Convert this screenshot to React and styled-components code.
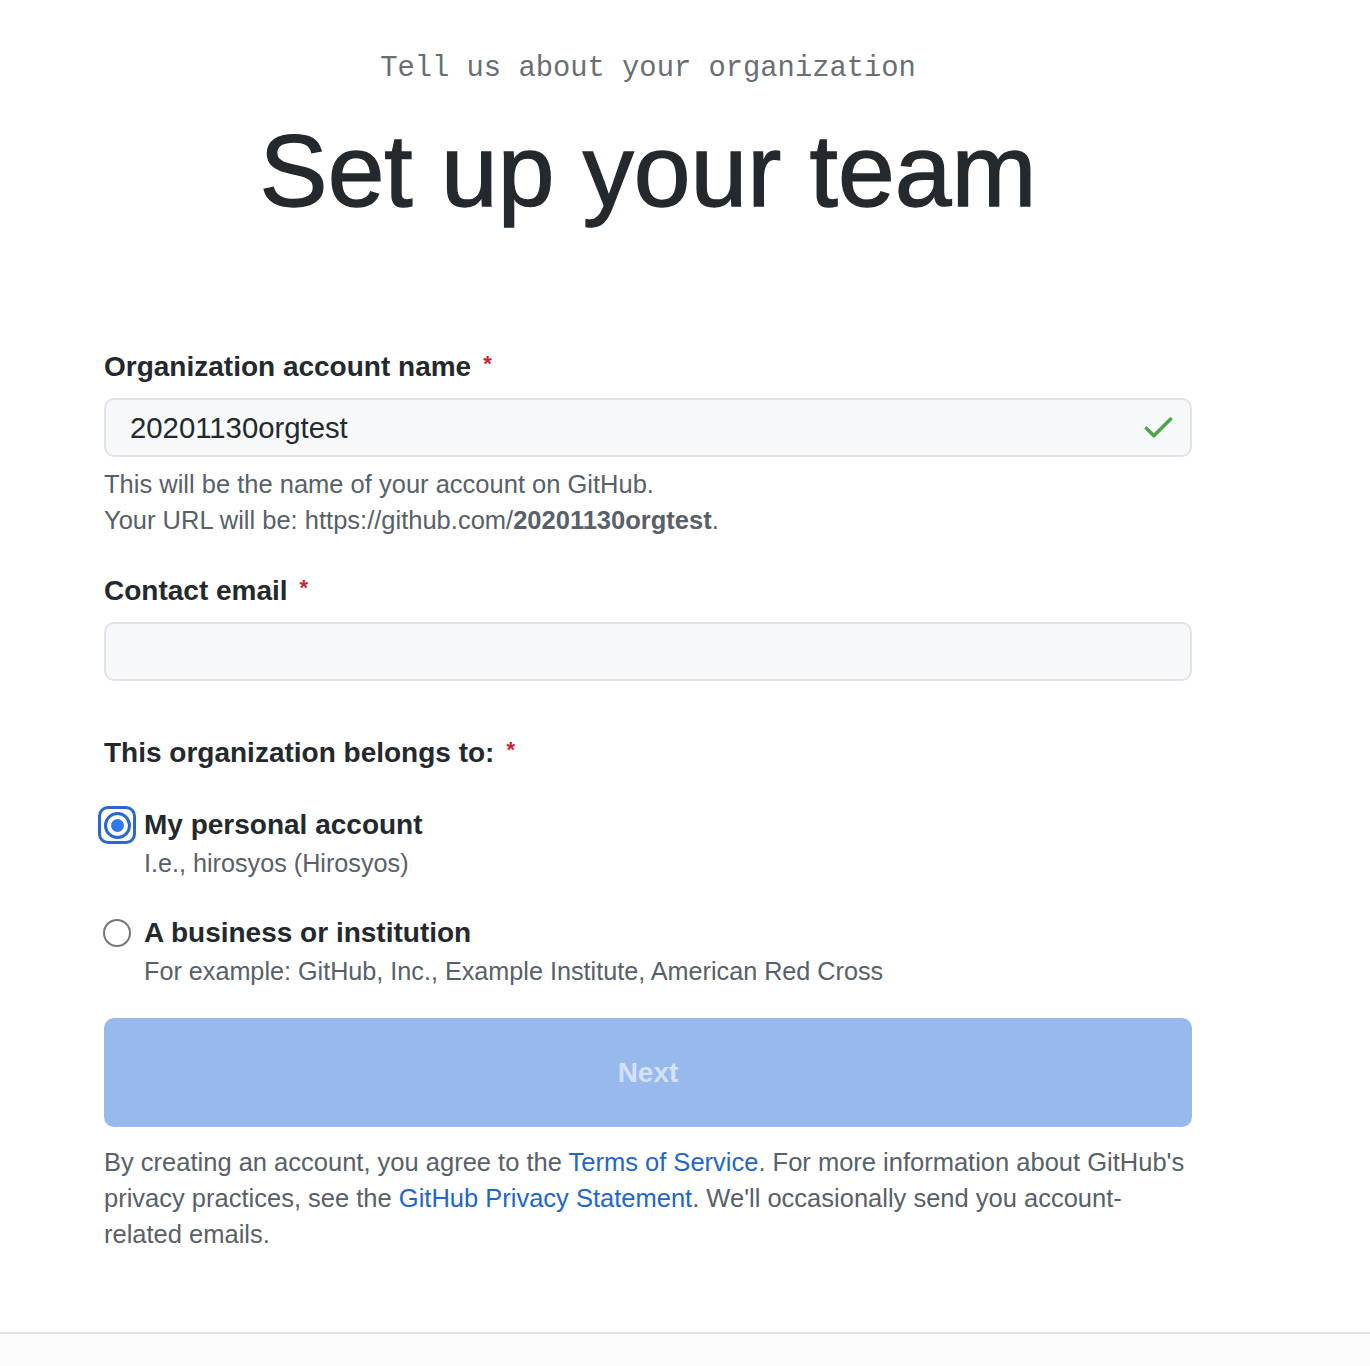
import React from "react";
import styled, { createGlobalStyle } from "styled-components";

const GlobalStyle = createGlobalStyle`
  html, body {
    margin: 0;
    padding: 0;
    background: #fff;
  }
  body {
    font-family: "Liberation Sans", Arial, sans-serif;
    color: #24292e;
  }
`;

const Page = styled.div`
  width: 1370px;
  min-height: 1366px;
  display: flex;
  flex-direction: column;
`;

const Main = styled.main`
  width: 1088px;
  margin-left: 104px;
  display: flex;
  flex-direction: column;
`;

const Header = styled.header`
  display: flex;
  flex-direction: column;
  align-items: center;
  padding-top: 49px;
`;

const Eyebrow = styled.div`
  font-family: "Liberation Mono", "DejaVu Sans Mono", monospace;
  font-size: 28.8px;
  line-height: 40px;
  color: #6a6e73;
`;

const Title = styled.h1`
  margin: 31px 0 0;
  font-size: 102px;
  line-height: 102px;
  font-weight: 400;
  color: #24292e;
  -webkit-text-stroke: 1.4px #24292e;
`;

const Form = styled.form`
  display: flex;
  flex-direction: column;
  margin-top: 124px;
`;

const Label = styled.label`
  display: block;
  font-size: 28px;
  line-height: 36px;
  font-weight: 700;
  color: #24292e;
  margin-top: ${(p) => p.$gap || 0}px;
`;

const Required = styled.span`
  color: #cb2431;
  font-size: 22px;
  margin-left: 12px;
  vertical-align: 5px;
`;

const InputWrap = styled.div`
  position: relative;
  margin-top: 13px;
`;

const Input = styled.input`
  box-sizing: border-box;
  width: 100%;
  height: 59px;
  border: 2px solid #e1e4e8;
  border-radius: 10px;
  background: #f6f8fa;
  padding: 0 70px 0 24px;
  font-family: "Liberation Sans", Arial, sans-serif;
  font-size: 29.3px;
  color: #24292e;
  outline: none;
`;

const Check = styled.svg`
  position: absolute;
  right: 15px;
  top: 10px;
  width: 37px;
  height: 37px;
  fill: #4fa447;
`;

const Help = styled.p`
  margin: 9px 0 0;
  font-size: 25.5px;
  line-height: 36px;
  color: #586069;
  strong {
    font-weight: 700;
  }
`;

const Options = styled.div`
  display: flex;
  flex-direction: column;
  gap: 34px;
  margin-top: 36px;
`;

const Option = styled.label`
  display: grid;
  grid-template-columns: 40px 1fr;
  align-items: center;
`;

const RadioBox = styled.span`
  width: 26px;
  height: 36px;
  display: flex;
  align-items: center;
  justify-content: center;
`;

const Focus = styled.span`
  box-sizing: border-box;
  flex: none;
  width: 38px;
  height: 38px;
  border: 3.5px solid #2a68cf;
  border-radius: 10px;
  display: flex;
  align-items: center;
  justify-content: center;
`;

const Radio = styled.span`
  box-sizing: border-box;
  flex: none;
  width: ${(p) => (p.$checked ? 27 : 28)}px;
  height: ${(p) => (p.$checked ? 27 : 28)}px;
  border-radius: 50%;
  border: ${(p) => (p.$checked ? "3px solid #2a68cf" : "2px solid #767676")};
  background: #fff;
  display: flex;
  align-items: center;
  justify-content: center;
  &::after {
    content: "";
    display: ${(p) => (p.$checked ? "block" : "none")};
    width: 13px;
    height: 13px;
    border-radius: 50%;
    background: #2f78ee;
  }
`;

const OptionTitle = styled.span`
  font-size: 28px;
  line-height: 36px;
  font-weight: 700;
  color: #24292e;
`;

const OptionNote = styled.span`
  grid-column: 2;
  margin-top: 2px;
  font-size: 25.2px;
  line-height: 36px;
  color: #586069;
`;

const NextButton = styled.button`
  margin-top: 29px;
  height: 109px;
  width: 100%;
  border: none;
  border-radius: 10px;
  background: #97b9ec;
  color: rgba(255, 255, 255, 0.6);
  font-family: "Liberation Sans", Arial, sans-serif;
  font-size: 28px;
  font-weight: 700;
  cursor: not-allowed;
`;

const Legal = styled.p`
  margin: 17px 0 0;
  font-size: 25.5px;
  line-height: 36px;
  color: #586069;
  a {
    color: #2267c8;
    text-decoration: none;
  }
`;

const Footer = styled.footer`
  margin-top: 80px;
  border-top: 2px solid #e4e4e4;
  background: #fcfcfc;
  flex: 1;
`;

const RadioOption = ({ checked, title, note }) => (
  <Option>
    <RadioBox>
      {checked ? (
        <Focus>
          <Radio $checked />
        </Focus>
      ) : (
        <Radio />
      )}
    </RadioBox>
    <OptionTitle>{title}</OptionTitle>
    <OptionNote>{note}</OptionNote>
  </Option>
);

export default function App() {
  return (
    <>
      <GlobalStyle />
      <Page>
        <Main>
          <Header>
            <Eyebrow>Tell us about your organization</Eyebrow>
            <Title>Set up your team</Title>
          </Header>
          <Form onSubmit={(e) => e.preventDefault()}>
            <Label>
              Organization account name<Required>*</Required>
            </Label>
            <InputWrap>
              <Input defaultValue="20201130orgtest" />
              <Check viewBox="0 0 16 16">
                <path d="M13.78 4.22a.75.75 0 010 1.06l-7.25 7.25a.75.75 0 01-1.06 0L2.22 9.28a.75.75 0 011.06-1.06L6 10.94l6.72-6.72a.75.75 0 011.06 0z" />
              </Check>
            </InputWrap>
            <Help>
              This will be the name of your account on GitHub.
              <br />
              Your URL will be: https://github.com/<strong>20201130orgtest</strong>.
            </Help>

            <Label $gap={32}>
              Contact email<Required>*</Required>
            </Label>
            <InputWrap>
              <Input type="email" />
            </InputWrap>

            <Label $gap={51}>
              This organization belongs to:<Required>*</Required>
            </Label>
            <Options>
              <RadioOption checked title="My personal account" note="I.e., hirosyos (Hirosyos)" />
              <RadioOption
                title="A business or institution"
                note="For example: GitHub, Inc., Example Institute, American Red Cross"
              />
            </Options>

            <NextButton type="submit" disabled>
              Next
            </NextButton>
            <Legal>
              By creating an account, you agree to the <a href="#">Terms of Service</a>. For more
              information about GitHub's privacy practices, see the{" "}
              <a href="#">GitHub Privacy Statement</a>. We'll occasionally send you account-related
              emails.
            </Legal>
          </Form>
        </Main>
        <Footer />
      </Page>
    </>
  );
}
